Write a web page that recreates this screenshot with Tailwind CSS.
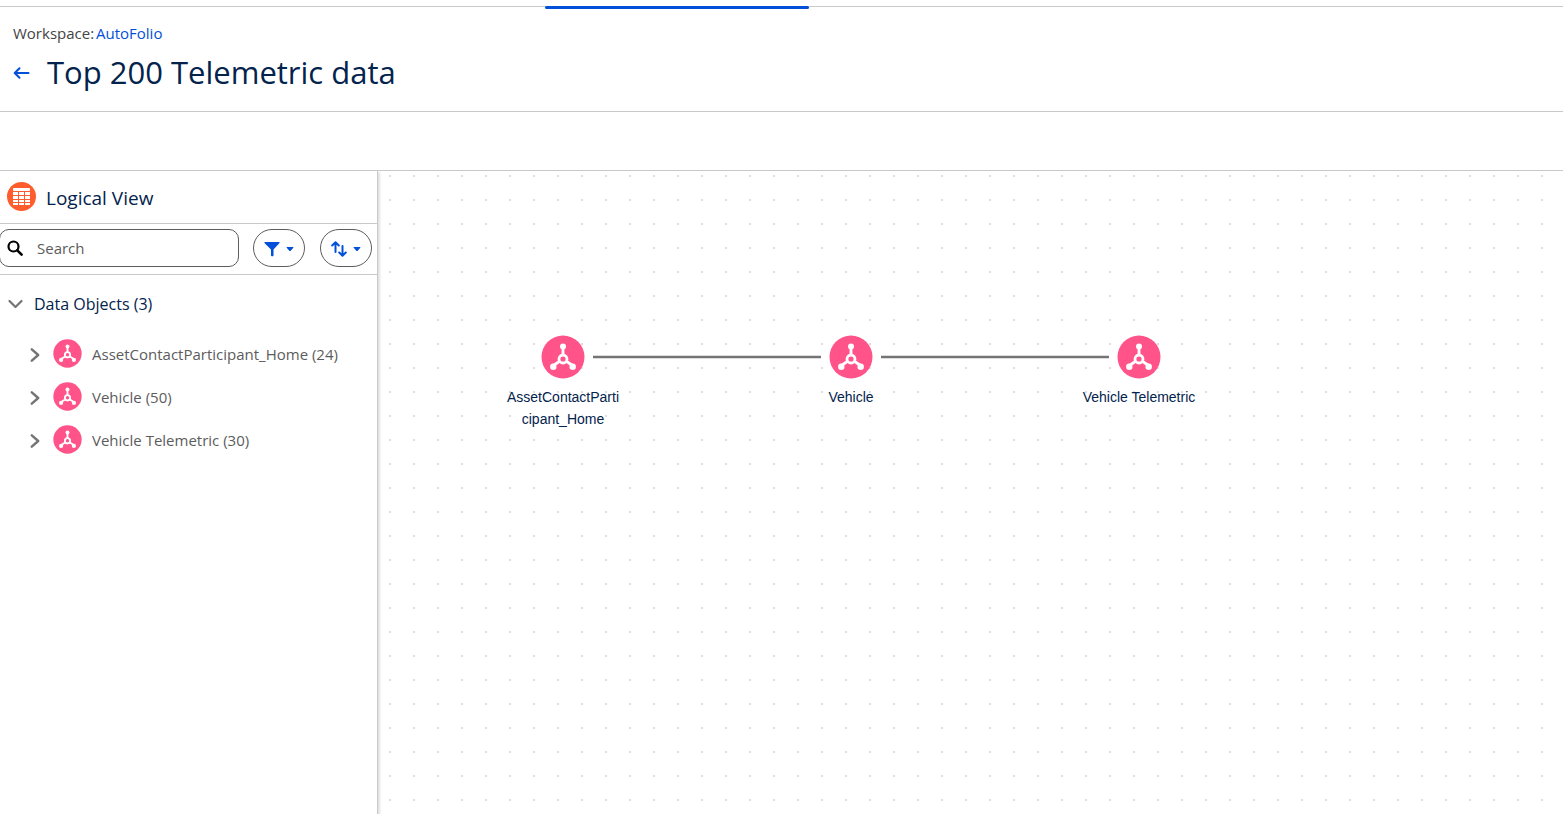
<!DOCTYPE html>
<html lang="en">
<head>
<meta charset="utf-8">
<meta name="viewport" content="width=device-width, initial-scale=1">
<title>Top 200 Telemetric data</title>
<script src="https://cdn.jsdelivr.net/npm/@tailwindcss/browser@4"></script>
</head>
<body class="flex h-screen flex-col overflow-hidden bg-white font-['Open_Sans','Noto_Sans',sans-serif] text-[#03234d]">
<svg class="hidden" aria-hidden="true">
  <symbol id="model" viewBox="0 0 44 44">
    <circle cx="22" cy="22" r="21.5" fill="#ff538a"/>
    <g stroke="#fff" stroke-width="2.8" fill="none">
      <path d="M22 12V20M19 26L12.500 30.500M25 26L31.500 30.500"/>
      <circle cx="22" cy="24" r="4" stroke-width="2.800"/>
    </g>
    <g fill="#fff"><circle cx="22" cy="11.500" r="3"/><circle cx="12.300" cy="31.800" r="3.200"/><circle cx="31.700" cy="31.800" r="3.200"/></g>
  </symbol>
  <symbol id="chevron" viewBox="0 0 10 14"><path d="M1.800 1.300L8.200 7L1.800 12.700" fill="none" stroke="#747474" stroke-width="2.400" stroke-linecap="round" stroke-linejoin="round"/></symbol>
  <symbol id="caret" viewBox="0 0 8 5"><path d="M.8 0H7.200Q7.700 .4 7.300 .8L4.500 3.900Q4 4.300 3.500 3.900L.7 .8Q.3 .4 .8 0Z" fill="#0250d9"/></symbol>
</svg>

<nav aria-label="Tabs" class="relative h-[7px] shrink-0 border-b border-[#c9c9c9]">
  <span class="absolute top-[6px] left-[545px] h-[3px] w-[264px] rounded-sm bg-[#0250d9]"></span>
</nav>

<header class="h-[105px] shrink-0 border-b border-[#c9c9c9] px-[13px] pt-4">
  <p class="text-[15px] leading-5 text-[#444]">Workspace: <a href="#" class="-ml-0.5 text-[#0250d9]">AutoFolio</a></p>
  <div class="mt-2 flex items-center gap-4">
    <button type="button" aria-label="Back" class="mt-px">
      <svg class="h-[14px] w-[18px]" viewBox="0 0 18 14" fill="none" stroke="#0250d9" stroke-width="2" stroke-linecap="round" stroke-linejoin="round"><path d="M15.500 7H2.500M6.500 2.300L1.700 7L6.500 11.700"/></svg>
    </button>
    <h1 class="text-[31px] leading-[42px]">Top 200 Telemetric data</h1>
  </div>
</header>

<div class="h-[59px] shrink-0 border-b border-[#c9c9c9]" role="toolbar" aria-label="Actions"></div>

<main class="flex min-h-0 flex-1">
  <aside class="z-10 w-[378px] shrink-0 border-r border-[#c9c9c9] bg-white shadow-[2px_1px_2px_rgba(0,0,0,0.12)]">
    <div class="flex h-[53px] items-center gap-[10px] border-b border-[#c9c9c9] pb-px pl-[7px]">
      <svg class="h-[29px] w-[29px]" viewBox="0 0 29 29" aria-hidden="true">
        <circle cx="14.500" cy="14.500" r="14.500" fill="#ff5d2d"/>
        <g fill="#fff"><rect x="6" y="6" width="17" height="3" rx=".8"/>
        <path d="M6 10H11V13H6ZM12 10H17V13H12ZM18 10H23V13H18ZM6 14H11V17H6ZM12 14H17V17H12ZM18 14H23V17H18ZM6 18H11V20H6ZM12 18H17V20H12ZM18 18H23V20H18ZM6 21H11V23H6ZM12 21H17V23H12ZM18 21H23V23H18Z"/></g>
      </svg>
      <h2 class="pt-0.5 text-[19px] leading-6">Logical View</h2>
    </div>
    <div class="flex h-[51px] items-center border-b border-[#c9c9c9] pr-[5px] pb-[2px]">
      <label class="-ml-px flex h-[38px] min-w-0 flex-1 items-center rounded-[10px] border border-[#5c5c5c] pl-[7px]">
        <svg class="h-4 w-4 shrink-0" viewBox="0 0 16 16" fill="none" stroke="#000" stroke-linecap="round"><circle cx="6.500" cy="6.500" r="5" stroke-width="2.200"/><path d="M10.300 10.300L14.600 14.600" stroke-width="2.600"/></svg>
        <input type="search" aria-label="Search" placeholder="Search" class="ml-[14px] w-full min-w-0 text-[15px] leading-5 outline-none placeholder:text-[#5c5c5c]">
      </label>
      <button type="button" aria-label="Filter" class="ml-[14px] flex h-[38px] w-[52px] items-center justify-center gap-[6px] rounded-full border border-[#5c5c5c]">
        <svg class="mt-[2px] h-[15px] w-[16px]" viewBox="0 0 16 15"><path d="M1 0H15Q16 .5 15.300 1.200L9.500 7.500V13.500Q9.500 14.300 8.700 14.300H7.800Q7 14.300 7 13.500V7.500L.7 1.200Q0 .5 1 0Z" fill="#0250d9"/></svg>
        <svg class="mt-[3px] h-[5px] w-[8px]"><use href="#caret"/></svg>
      </button>
      <button type="button" aria-label="Sort" class="ml-[15px] flex h-[38px] w-[52px] items-center justify-center gap-[6px] rounded-full border border-[#5c5c5c]">
        <svg class="mt-[2px] h-4 w-4" viewBox="0 0 16 16" fill="none" stroke="#0250d9" stroke-width="2" stroke-linecap="round" stroke-linejoin="round"><path d="M4.500 11V1.500M1.200 4.500L4.500 1.300L7.800 4.500M11.500 5V14.500M8.200 11.500L11.500 14.700L14.800 11.500"/></svg>
        <svg class="mt-[3px] h-[5px] w-[8px]"><use href="#caret"/></svg>
      </button>
    </div>
    <section class="pt-[17px]">
      <button type="button" aria-expanded="true" class="flex h-6 items-center gap-[11px] pl-2">
        <svg class="h-[14px] w-[15px] shrink-0" viewBox="0 0 15 14"><path d="M1.500 4L7.500 10L13.500 4" fill="none" stroke="#747474" stroke-width="2.200" stroke-linecap="round" stroke-linejoin="round"/></svg>
        <span class="text-base leading-6">Data Objects (3)</span>
      </button>
      <ul class="mt-4 text-[15px] leading-5 text-[#5c5c5c]">
        <li class="flex h-[43px] items-center pl-[30px]"><button type="button" aria-label="Expand AssetContactParticipant_Home" class="mt-[2px]"><svg class="h-[14px] w-[10px]"><use href="#chevron"/></svg></button><svg class="ml-[13px] h-[29px] w-[29px]"><use href="#model"/></svg><span class="ml-[10px]">AssetContactParticipant_Home (24)</span></li>
        <li class="flex h-[43px] items-center pl-[30px]"><button type="button" aria-label="Expand Vehicle" class="mt-[2px]"><svg class="h-[14px] w-[10px]"><use href="#chevron"/></svg></button><svg class="ml-[13px] h-[29px] w-[29px]"><use href="#model"/></svg><span class="ml-[10px]">Vehicle (50)</span></li>
        <li class="flex h-[43px] items-center pl-[30px]"><button type="button" aria-label="Expand Vehicle Telemetric" class="mt-[2px]"><svg class="h-[14px] w-[10px]"><use href="#chevron"/></svg></button><svg class="ml-[13px] h-[29px] w-[29px]"><use href="#model"/></svg><span class="ml-[10px]">Vehicle Telemetric (30)</span></li>
      </ul>
    </section>
  </aside>

  <section aria-label="Diagram" class="relative min-w-0 flex-1 overflow-hidden font-['Liberation_Sans',sans-serif] text-[14px] leading-[22px]">
    <svg class="absolute inset-0 h-full w-full" aria-hidden="true">
      <defs><pattern id="dots" width="24" height="24" patternUnits="userSpaceOnUse"><rect x="11" y="4" width="2" height="2" fill="#dedede"/></pattern></defs>
      <rect width="100%" height="100%" fill="url(#dots)"/>
      <path d="M215 186H443M503 186H731" stroke="#747474" stroke-width="2.500"/>
    </svg>
    <div class="absolute top-[164px] left-[125px] flex w-[120px] flex-col items-center text-center">
      <svg class="h-11 w-11"><use href="#model"/></svg>
      <span class="mt-[7px]">AssetContactParti<br>cipant_Home</span>
    </div>
    <div class="absolute top-[164px] left-[413px] flex w-[120px] flex-col items-center text-center">
      <svg class="h-11 w-11"><use href="#model"/></svg>
      <span class="mt-[7px]">Vehicle</span>
    </div>
    <div class="absolute top-[164px] left-[701px] flex w-[120px] flex-col items-center text-center">
      <svg class="h-11 w-11"><use href="#model"/></svg>
      <span class="mt-[7px]">Vehicle Telemetric</span>
    </div>
  </section>
</main>
</body>
</html>
